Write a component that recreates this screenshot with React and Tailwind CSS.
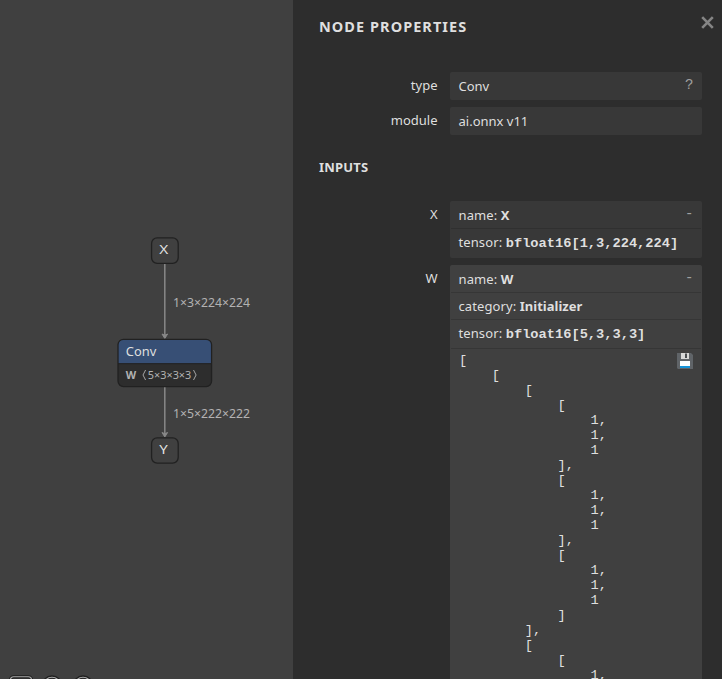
const tensorText = `[
    [
        [
            [
                1,
                1,
                1
            ],
            [
                1,
                1,
                1
            ],
            [
                1,
                1,
                1
            ]
        ],
        [
            [
                1,`;

function Graph() {
  return (
    <svg width="293" height="679" viewBox="0 0 293 679" className="block font-['Noto_Sans',sans-serif]">
      <g stroke="#888888" fill="none">
        <path d="M164.8 264V338" strokeWidth="1.5" />
        <path d="M162 334L164.8 338.5L167.6 334L164.8 335.2Z" fill="#888888" />
        <path d="M164.8 387V436" strokeWidth="1.5" />
        <path d="M162 432.5L164.8 437L167.6 432.5L164.8 433.7Z" fill="#888888" />
      </g>
      <g fill="#404040" stroke="#212121" strokeWidth="1.3">
        <rect x="151.6" y="237.9" width="26.6" height="25.4" rx="5.5" />
        <rect x="151.6" y="437.9" width="26.6" height="25.2" rx="5.5" />
      </g>
      <rect x="118" y="339.3" width="93.6" height="47.3" rx="5.5" fill="#2d2d2d" />
      <path d="M118 363.5V344.8a5.5 5.5 0 0 1 5.5-5.5h82.6a5.5 5.5 0 0 1 5.5 5.5v18.7z" fill="#374f75" />
      <path d="M118 363.7h93.6" stroke="#212121" />
      <rect x="118" y="339.3" width="93.6" height="47.3" rx="5.5" fill="none" stroke="#212121" strokeWidth="1.3" />
      <g fill="#dfdfdf" fontSize="13">
        <text x="159.2" y="254" textLength="9" lengthAdjust="spacingAndGlyphs">X</text>
        <text x="159.2" y="454" textLength="8.5" lengthAdjust="spacingAndGlyphs">Y</text>
        <text x="125.8" y="356" textLength="30.5" lengthAdjust="spacingAndGlyphs">Conv</text>
      </g>
      <g fill="#b2b2b2" fontSize="12">
        <text x="173" y="307" textLength="77" lengthAdjust="spacingAndGlyphs">1×3×224×224</text>
        <text x="173" y="418" textLength="77" lengthAdjust="spacingAndGlyphs">1×5×222×222</text>
      </g>
      <g fill="#b2b2b2" fontSize="11">
        <text x="125.7" y="379" fontWeight="700" textLength="10.4" lengthAdjust="spacingAndGlyphs">W</text>
        <text x="147.8" y="379" textLength="43.5" lengthAdjust="spacingAndGlyphs">5×3×3×3</text>
      </g>
      <path d="M145.6 370L143 375L145.6 380M193.5 370L196.1 375L193.5 380" fill="none" stroke="#b2b2b2" strokeWidth="0.9" />
      <g fill="none" stroke="#1f1f1f" strokeWidth="3.2">
        <rect x="10.5" y="676.8" width="21" height="16" rx="3" />
        <circle cx="52" cy="685.5" r="8.7" />
        <circle cx="83" cy="685.5" r="8.7" />
      </g>
      <g fill="none" stroke="#aaaaaa" strokeWidth="1.1">
        <rect x="10.5" y="676.8" width="21" height="16" rx="3" />
        <circle cx="52" cy="686" r="8.7" />
        <circle cx="83" cy="686" r="8.7" />
      </g>
    </svg>
  );
}

function Row({ label, boxClass, children }) {
  return (
    <div className="flex items-start">
      <div className="w-[118.5px] shrink-0 pt-[3px] text-right leading-[20px]">{label}</div>
      <div className={`relative ml-[12.5px] w-[252px] rounded-[2px] ${boxClass}`}>{children}</div>
    </div>
  );
}

function Toggle({ children }) {
  return <span className="absolute right-[8.5px] top-[3px] font-['Liberation_Mono',monospace] text-[14px] leading-[20px] text-[#a0a0a0]">{children}</span>;
}

function Line({ name, height, children }) {
  return (
    <div className={`whitespace-nowrap pl-[8.5px] ${height}`}>
      <span className="tracking-[0.1px]">{name}: </span>
      {children}
    </div>
  );
}

function FloppyIcon() {
  return (
    <svg width="16" height="16" viewBox="0 0 16 16" className="absolute right-[8px] top-[4px]">
      <path d="M1 0H14L16 2V16H1L0 15V0Z" fill="#606468" />
      <path d="M4 0H12V6H4Z" fill="#d8d8d8" />
      <path d="M8 .5H10V5H8Z" fill="#4a4d50" />
      <path d="M3 8H13V13H3Z" fill="#fff" />
      <path d="M3 13H13V15H3Z" fill="#1593d8" />
    </svg>
  );
}

export default function App() {
  return (
    <div className="flex h-[679px] w-[722px] overflow-hidden bg-[#404040] font-['Noto_Sans',sans-serif] text-[13px] text-[#dfdfdf]">
      <main className="w-[293px] shrink-0"><Graph /></main>
      <aside className="w-[429px] bg-[#2d2d2d]">
        <header className="flex h-[72px] justify-between pl-[26px] pr-[8px] pt-[16px]">
          <h1 className="text-[14.5px] font-bold leading-[20px] tracking-[1.05px]">NODE PROPERTIES</h1>
          <svg width="13" height="13" viewBox="0 0 13 13" className="block">
            <path d="M1.2 1.2L11.8 11.8M11.8 1.2L1.2 11.8" stroke="#858585" strokeWidth="2.6" />
          </svg>
        </header>
        <section className="flex flex-col gap-[7px] pl-[26px]">
          <Row label="type" boxClass="h-[28px] bg-[#383838] pl-[8.5px] leading-[28px]">
            Conv<Toggle>?</Toggle>
          </Row>
          <Row label="module" boxClass="h-[28px] bg-[#383838] pl-[8.5px] leading-[28px]">
            ai.onnx v11
          </Row>
        </section>
        <h2 className="mb-[24px] ml-[26px] mt-[22px] text-[13px] font-bold leading-[20px] tracking-[0.2px]">INPUTS</h2>
        <section className="flex flex-col gap-[7px] pl-[26px]">
          <Row label="X" boxClass="h-[57px] bg-[#383838]">
            <Toggle>-</Toggle>
            <Line name="name" height="h-[27px] leading-[29px]"><b>X</b></Line>
            <div className="mx-px border-t border-[#303030]" />
            <Line name="tensor" height="h-[29px] leading-[27px]"><b className="font-['Liberation_Mono',monospace] text-[13.7px]">bfloat16[1,3,224,224]</b></Line>
          </Row>
          <Row label="W" boxClass="bg-[#404040]">
            <Toggle>-</Toggle>
            <Line name="name" height="h-[27px] leading-[29px]"><b>W</b></Line>
            <div className="mx-px border-t border-[#363636]" />
            <Line name="category" height="h-[26px] leading-[27px]"><b>Initializer</b></Line>
            <div className="mx-px border-t border-[#363636]" />
            <Line name="tensor" height="h-[28px] leading-[27px]"><b className="font-['Liberation_Mono',monospace] text-[13.7px]">bfloat16[5,3,3,3]</b></Line>
            <div className="relative mx-px border-t border-[#363636]">
              <FloppyIcon />
              <pre className="pl-[8px] pt-[4px] font-['Liberation_Mono',monospace] text-[13.7px] leading-[15px]">{tensorText}</pre>
            </div>
          </Row>
        </section>
      </aside>
    </div>
  );
}
